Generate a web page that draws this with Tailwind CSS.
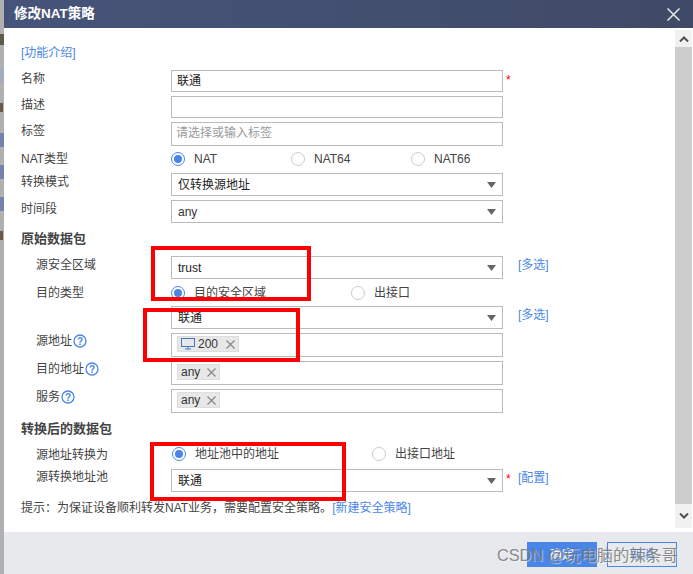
<!DOCTYPE html>
<html lang="zh">
<head>
    <meta charset="utf-8">
    <title>修改NAT策略</title>
    <script src="https://cdn.jsdelivr.net/npm/@tailwindcss/browser@4"></script>
</head>
<body class="w-[693px] h-[574px] overflow-hidden bg-white text-[12px] text-[#444] font-['Liberation_Sans','Noto_Sans_CJK_SC',sans-serif]">
<div class="relative flex h-[574px]">
    <!-- page behind the dialog -->
    <div class="relative w-[4px] shrink-0 bg-[#b0b0b0]">
        <div class="absolute left-0 top-[34px] w-[4px] h-[11px] bg-[#5f5a4c]"></div>
        <div class="absolute left-0 top-[68px] w-[4px] h-[14px] bg-[#a3adc2]"></div>
        <div class="absolute left-0 top-[103px] w-[3px] h-[9px] bg-[#6b5a4a]"></div>
        <div class="absolute left-0 top-[133px] w-[4px] h-[14px] bg-[#7484a8]"></div>
        <div class="absolute left-0 top-[165px] w-[4px] h-[14px] bg-[#7484a8]"></div>
        <div class="absolute left-0 top-[197px] w-[4px] h-[14px] bg-[#7484a8]"></div>
        <div class="absolute left-0 top-[231px] w-[3px] h-[9px] bg-[#6b5a4a]"></div>
    </div>

    <div class="flex-1 flex flex-col">
        <header class="h-[28px] shrink-0 flex items-center justify-between pl-[10px] pr-[13px] bg-gradient-to-r from-[#47547a] to-[#3f4a66] text-[13.5px] font-bold text-white">
            <span>修改NAT策略</span>
            <svg width="13" height="13" viewBox="0 0 13 13" class="stroke-[#e8e8e8] stroke-[1.5]"><path d="M0.5 0.5 L12.5 12.5 M12.5 0.5 L0.5 12.5" fill="none"/></svg>
        </header>

        <main class="h-[504px] flex">
            <div class="w-[671px] pl-[17px] pt-[17px]">
                <a class="block h-[25px] leading-[16px] text-[#4a86e8]">[功能介绍]</a>

                <div class="flex h-[26px]">
                    <label class="w-[150px] pt-[1px] leading-[16px]">名称</label>
                    <div class="w-[332px] h-[22px] border border-[#bbb] pl-[5px] leading-[21px] text-[#222]">联通</div>
                    <span class="ml-[3px] text-[#f00] leading-[20px]">*</span>
                </div>
                <div class="flex h-[26px]">
                    <label class="w-[150px] pt-[1px] leading-[16px]">描述</label>
                    <div class="w-[332px] h-[22px] border border-[#bbb]"></div>
                </div>
                <div class="flex h-[27px]">
                    <label class="w-[150px] pt-[1px] leading-[16px]">标签</label>
                    <div class="w-[332px] h-[24px] border border-[#bbb] pl-[4px] leading-[20px] text-[#999]">请选择或输入标签</div>
                </div>
                <div class="flex h-[24px] pt-[1px] items-start">
                    <label class="w-[150px] pt-[1px] leading-[16px]">NAT类型</label>
                    <div class="w-[332px] pt-[1px] grid grid-cols-[120px_120px_92px]">
                        <span class="flex items-center h-[16px]"><span class="w-[14px] h-[14px] rounded-full border border-[#4a86e8] flex items-center justify-center mr-[9px]"><span class="w-[8px] h-[8px] rounded-full bg-[#4a86e8]"></span></span>NAT</span>
                        <span class="flex items-center h-[16px]"><span class="w-[14px] h-[14px] rounded-full border border-[#ccc] mr-[9px]"></span>NAT64</span>
                        <span class="flex items-center h-[16px]"><span class="w-[14px] h-[14px] rounded-full border border-[#ccc] mr-[9px]"></span>NAT66</span>
                    </div>
                </div>
                <div class="flex h-[27px]">
                    <label class="w-[150px] pt-[1px] leading-[16px]">转换模式</label>
                    <div class="w-[332px] h-[23px] border border-[#bbb] pl-[6px] pr-[6px] flex items-center justify-between text-[#222]">仅转换源地址<svg width="9" height="6" viewBox="0 0 9 6" class="fill-[#666]"><path d="M0 0 H9 L4.5 6 Z"/></svg></div>
                </div>
                <div class="flex h-[31px]">
                    <label class="w-[150px] pt-[1px] leading-[16px]">时间段</label>
                    <div class="w-[332px] h-[23px] border border-[#bbb] pl-[6px] pr-[6px] flex items-center justify-between text-[#333]">any<svg width="9" height="6" viewBox="0 0 9 6" class="fill-[#666]"><path d="M0 0 H9 L4.5 6 Z"/></svg></div>
                </div>

                <h3 class="h-[25px] leading-[16px] text-[13px] font-bold text-[#444]">原始数据包</h3>

                <div class="flex h-[27px]">
                    <label class="w-[150px] pl-[15px] pt-[1px] leading-[16px]">源安全区域</label>
                    <div class="w-[332px] h-[23px] border border-[#bbb] pl-[6px] pr-[6px] flex items-center justify-between text-[#222]">trust<svg width="9" height="6" viewBox="0 0 9 6" class="fill-[#666]"><path d="M0 0 H9 L4.5 6 Z"/></svg></div>
                    <a class="ml-[15px] text-[#4a86e8] leading-[18px]">[多选]</a>
                </div>
                <div class="flex h-[23px] pt-[1px]">
                    <label class="w-[150px] pl-[15px] pt-[1px] leading-[16px]">目的类型</label>
                    <div class="w-[332px] pt-[1px] grid grid-cols-[180px_152px]">
                        <span class="flex items-center h-[16px]"><span class="w-[14px] h-[14px] rounded-full border border-[#4a86e8] flex items-center justify-center mr-[9px]"><span class="w-[8px] h-[8px] rounded-full bg-[#4a86e8]"></span></span>目的安全区域</span>
                        <span class="flex items-center h-[16px]"><span class="w-[14px] h-[14px] rounded-full border border-[#ccc] mr-[9px]"></span>出接口</span>
                    </div>
                </div>
                <div class="flex h-[27px]">
                    <div class="w-[150px]"></div>
                    <div class="w-[332px] h-[23px] border border-[#bbb] pl-[6px] pr-[6px] flex items-center justify-between text-[#222]">联通<svg width="9" height="6" viewBox="0 0 9 6" class="fill-[#666]"><path d="M0 0 H9 L4.5 6 Z"/></svg></div>
                    <a class="ml-[15px] text-[#4a86e8] leading-[19px]">[多选]</a>
                </div>
                <div class="flex h-[28px]">
                    <label class="w-[150px] pl-[15px] flex gap-[1px] items-start leading-[16px]">源地址
                        <svg width="14" height="14" viewBox="0 0 14 14" class="mt-[1px] fill-none stroke-[#4a86e8] stroke-[1.3]"><circle cx="7" cy="7" r="6"/><text x="7" y="10.5" text-anchor="middle" font-size="10" font-weight="bold" fill="#4a86e8" stroke="none">?</text></svg>
                    </label>
                    <div class="w-[332px] h-[24px] border border-[#bbb] pl-[5px] pt-[2px] flex items-start">
                        <span class="flex items-center h-[16px] bg-[#e8e8e8] border border-[#ddd] px-[3px] text-[#333]">
                            <svg width="14" height="12" viewBox="0 0 14 12" class="fill-none stroke-[#3f78c9] mr-[3px]"><rect x="0.5" y="0.5" width="13" height="8"/><path d="M4 11 H10 M7 9 V11"/></svg>200
                            <svg width="9" height="9" viewBox="0 0 9 9" class="ml-[8px] stroke-[#888] stroke-[1.2]"><path d="M0.5 0.5 L8.5 8.5 M8.5 0.5 L0.5 8.5" fill="none"/></svg>
                        </span>
                    </div>
                </div>
                <div class="flex h-[28px]">
                    <label class="w-[150px] pl-[15px] flex gap-[1px] items-start leading-[16px]">目的地址
                        <svg width="14" height="14" viewBox="0 0 14 14" class="mt-[1px] fill-none stroke-[#4a86e8] stroke-[1.3]"><circle cx="7" cy="7" r="6"/><text x="7" y="10.5" text-anchor="middle" font-size="10" font-weight="bold" fill="#4a86e8" stroke="none">?</text></svg>
                    </label>
                    <div class="w-[332px] h-[24px] border border-[#bbb] pl-[5px] pt-[2px] flex items-start">
                        <span class="flex items-center h-[16px] bg-[#e8e8e8] border border-[#ddd] px-[3px] text-[#333]">any
                            <svg width="9" height="9" viewBox="0 0 9 9" class="ml-[7px] stroke-[#888] stroke-[1.2]"><path d="M0.5 0.5 L8.5 8.5 M8.5 0.5 L0.5 8.5" fill="none"/></svg>
                        </span>
                    </div>
                </div>
                <div class="flex h-[32px]">
                    <label class="w-[150px] pl-[15px] flex gap-[1px] items-start leading-[16px]">服务
                        <svg width="14" height="14" viewBox="0 0 14 14" class="mt-[1px] fill-none stroke-[#4a86e8] stroke-[1.3]"><circle cx="7" cy="7" r="6"/><text x="7" y="10.5" text-anchor="middle" font-size="10" font-weight="bold" fill="#4a86e8" stroke="none">?</text></svg>
                    </label>
                    <div class="w-[332px] h-[24px] border border-[#bbb] pl-[5px] pt-[2px] flex items-start">
                        <span class="flex items-center h-[16px] bg-[#e8e8e8] border border-[#ddd] px-[3px] text-[#333]">any
                            <svg width="9" height="9" viewBox="0 0 9 9" class="ml-[7px] stroke-[#888] stroke-[1.2]"><path d="M0.5 0.5 L8.5 8.5 M8.5 0.5 L0.5 8.5" fill="none"/></svg>
                        </span>
                    </div>
                </div>

                <h3 class="h-[25px] leading-[16px] text-[13px] font-bold text-[#444]">转换后的数据包</h3>

                <div class="flex h-[23px]">
                    <label class="w-[150px] pl-[15px] pt-[1px] leading-[16px]">源地址转换为</label>
                    <div class="w-[332px] pl-[1px] grid grid-cols-[200px_131px]">
                        <span class="flex items-center h-[16px]"><span class="w-[14px] h-[14px] rounded-full border border-[#4a86e8] flex items-center justify-center mr-[9px]"><span class="w-[8px] h-[8px] rounded-full bg-[#4a86e8]"></span></span>地址池中的地址</span>
                        <span class="flex items-center h-[16px]"><span class="w-[14px] h-[14px] rounded-full border border-[#ccc] mr-[9px]"></span>出接口地址</span>
                    </div>
                </div>
                <div class="flex h-[31px]">
                    <label class="w-[150px] pl-[15px] leading-[16px]">源转换地址池</label>
                    <div class="w-[332px] h-[23px] border border-[#bbb] pl-[6px] pr-[6px] flex items-center justify-between text-[#222]">联通<svg width="9" height="6" viewBox="0 0 9 6" class="fill-[#666]"><path d="M0 0 H9 L4.5 6 Z"/></svg></div>
                    <span class="ml-[3px] w-[12px] text-[#f00] leading-[20px]">*</span>
                    <a class="text-[#4a86e8] leading-[18px]">[配置]</a>
                </div>

                <p class="leading-[16px]">提示&#xFF1A;为保证设备顺利转发NAT业务&#xFF0C;需要配置安全策略&#x3002;<a class="text-[#4a86e8]">[新建安全策略]</a></p>
            </div>

            <!-- scrollbar -->
            <div class="w-[17px] h-[498px] mt-[2px] flex flex-col bg-[#cdcdcd]">
                <div class="h-[17px] bg-[#f1f1f1] flex items-center justify-center">
                    <svg width="10" height="6" viewBox="0 0 10 6" class="fill-none stroke-[#505050] stroke-2"><path d="M1 5.5 L5 1.5 L9 5.5"/></svg>
                </div>
                <div class="flex-1"></div>
                <div class="h-[24px] bg-[#f1f1f1] flex items-center justify-center">
                    <svg width="10" height="6" viewBox="0 0 10 6" class="fill-none stroke-[#505050] stroke-2"><path d="M1 0.5 L5 4.5 L9 0.5"/></svg>
                </div>
            </div>
        </main>

        <footer class="h-[42px] flex justify-end gap-[10px] pt-[10px] pr-[16px] bg-[#e8e9ed]">
            <button class="w-[70px] h-[25px] bg-[#4a86e8] text-white">确定</button>
            <button class="w-[70px] h-[25px] border border-[#4a86e8] text-[#4a86e8]">取消</button>
        </footer>
    </div>

    <!-- annotations and watermark on top of the screenshot -->
    <div class="absolute left-[151px] top-[246px] w-[160px] h-[55px] border-4 border-[#f00]"></div>
    <div class="absolute left-[143px] top-[308px] w-[157px] h-[54px] border-4 border-[#f00]"></div>
    <div class="absolute left-[150px] top-[442px] w-[196px] h-[59px] border-4 border-[#f00]"></div>
    <div class="absolute left-[497px] top-[543px] text-[16.3px] leading-[24px] whitespace-nowrap text-[#6e6e6e]/80 [text-shadow:1px_1px_1px_rgba(255,255,255,0.5)]">CSDN @玩电脑的辣条哥</div>
</div>
</body>
</html>
